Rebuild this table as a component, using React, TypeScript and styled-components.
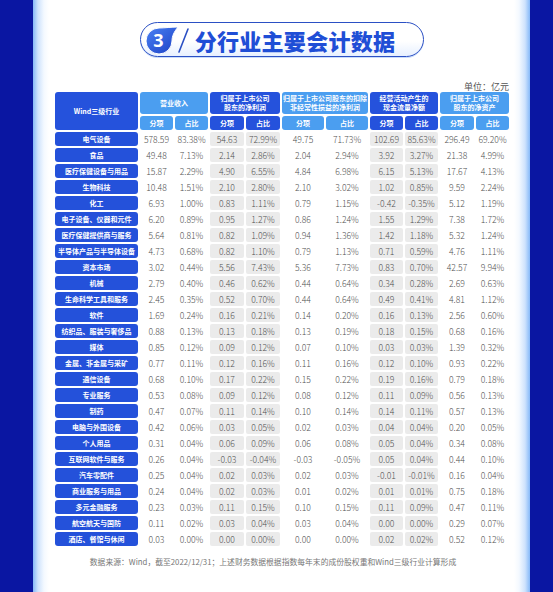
import React from "react";
import styled, { createGlobalStyle } from "styled-components";

const GlobalStyle = createGlobalStyle`
  html, body {
    margin: 0;
    padding: 0;
    background: #0a16a2;
  }
  body {
    font-family: "Noto Sans CJK SC", "Noto Sans", sans-serif;
  }
`;

const Page = styled.div`
  width: 553px;
  height: 592px;
  display: flex;
  padding-left: 33px;
  box-sizing: border-box;
  overflow: hidden;
`;

const Panel = styled.div`
  width: 497px;
  height: 592px;
  box-sizing: border-box;
  padding: 22px 21px 0 22px;
  display: flex;
  flex-direction: column;
  align-items: center;
  background: linear-gradient(
    to right,
    #86b9f8 0,
    #cfe3fd 5px,
    #f4f9ff 11px,
    #ffffff 16px,
    #ffffff calc(100% - 16px),
    #f4f9ff calc(100% - 11px),
    #cfe3fd calc(100% - 5px),
    #86b9f8 100%
  );
`;

const TitlePill = styled.div`
  display: inline-flex;
  align-items: center;
  height: 35px;
  box-sizing: border-box;
  padding: 0 28px 0 2px;
  border: 1.5px solid #2b50c4;
  border-radius: 18px;
  background: linear-gradient(#ffffff 0, #ffffff 55%, #e7f0ff 100%);
  box-shadow: 0 1px 0 #c9dcfb;
`;

const TitleText = styled.span`
  margin-left: 4px;
  font-size: 22px;
  font-weight: 900;
  letter-spacing: 0.3px;
  color: #1f4ed6;
  line-height: 1;
`;

const TableBlock = styled.div`
  margin-top: 25px;
  display: flex;
  flex-direction: column;
  width: 454px;
`;

const Unit = styled.div`
  height: 10px;
  line-height: 10px;
  font-size: 9px;
  text-align: right;
  color: #555;
`;

const Table = styled.div`
  display: grid;
  grid-template-columns: 83px 33px 33px 34px 34px 42px 42px 33px 33px 34px 33px;
  grid-template-rows: 22px 14px repeat(26, 14px);
  column-gap: 2px;
  row-gap: 2px;
`;

const HeadCell = styled.div<{ $tone: "dark" | "light"; $span?: number; $rows?: number }>`
  grid-column: span ${(p) => p.$span ?? 1};
  grid-row: span ${(p) => p.$rows ?? 1};
  display: flex;
  align-items: center;
  justify-content: center;
  text-align: center;
  border-radius: 3px;
  background: ${(p) => (p.$tone === "dark" ? "#2552dc" : "#4b9ef0")};
  color: #fff;
  font-size: 7px;
  font-weight: 700;
  line-height: 9px;
  white-space: pre;
`;

const NameCell = styled.div`
  display: flex;
  align-items: center;
  justify-content: center;
  border-radius: 3px;
  background: #2451da;
  color: #fff;
  font-size: 7px;
  font-weight: 700;
  white-space: nowrap;
`;

const NumCell = styled.div<{ $shaded: boolean }>`
  display: flex;
  align-items: center;
  justify-content: center;
  border-radius: 2px;
  background: ${(p) => (p.$shaded ? "#ebebeb" : "transparent")};
  color: #505050;
  font-size: 8.6px;
  font-weight: 300;
  white-space: nowrap;
`;

const Footnote = styled.div`
  margin-top: 11px;
  padding-right: 18px;
  font-size: 7.8px;
  line-height: 10px;
  color: #777;
  white-space: nowrap;
`;

const groups: { label: string; tone: "dark" | "light" }[] = [
  { label: "营业收入", tone: "light" },
  { label: "归属于上市公司\n股东的净利润", tone: "dark" },
  { label: "归属于上市公司股东的扣除\n非经常性损益的净利润", tone: "light" },
  { label: "经营活动产生的\n现金流量净额", tone: "dark" },
  { label: "归属于上市公司\n股东的净资产", tone: "light" },
];

const rows: [string, ...string[]][] = [
  ["电气设备", "578.59", "83.38%", "54.63", "72.99%", "49.75", "71.73%", "102.69", "85.63%", "296.49", "69.20%"],
  ["食品", "49.48", "7.13%", "2.14", "2.86%", "2.04", "2.94%", "3.92", "3.27%", "21.38", "4.99%"],
  ["医疗保健设备与用品", "15.87", "2.29%", "4.90", "6.55%", "4.84", "6.98%", "6.15", "5.13%", "17.67", "4.13%"],
  ["生物科技", "10.48", "1.51%", "2.10", "2.80%", "2.10", "3.02%", "1.02", "0.85%", "9.59", "2.24%"],
  ["化工", "6.93", "1.00%", "0.83", "1.11%", "0.79", "1.15%", "-0.42", "-0.35%", "5.12", "1.19%"],
  ["电子设备、仪器和元件", "6.20", "0.89%", "0.95", "1.27%", "0.86", "1.24%", "1.55", "1.29%", "7.38", "1.72%"],
  ["医疗保健提供商与服务", "5.64", "0.81%", "0.82", "1.09%", "0.94", "1.36%", "1.42", "1.18%", "5.32", "1.24%"],
  ["半导体产品与半导体设备", "4.73", "0.68%", "0.82", "1.10%", "0.79", "1.13%", "0.71", "0.59%", "4.76", "1.11%"],
  ["资本市场", "3.02", "0.44%", "5.56", "7.43%", "5.36", "7.73%", "0.83", "0.70%", "42.57", "9.94%"],
  ["机械", "2.79", "0.40%", "0.46", "0.62%", "0.44", "0.64%", "0.34", "0.28%", "2.69", "0.63%"],
  ["生命科学工具和服务", "2.45", "0.35%", "0.52", "0.70%", "0.44", "0.64%", "0.49", "0.41%", "4.81", "1.12%"],
  ["软件", "1.69", "0.24%", "0.16", "0.21%", "0.14", "0.20%", "0.16", "0.13%", "2.56", "0.60%"],
  ["纺织品、服装与奢侈品", "0.88", "0.13%", "0.13", "0.18%", "0.13", "0.19%", "0.18", "0.15%", "0.68", "0.16%"],
  ["媒体", "0.85", "0.12%", "0.09", "0.12%", "0.07", "0.10%", "0.03", "0.03%", "1.39", "0.32%"],
  ["金属、非金属与采矿", "0.77", "0.11%", "0.12", "0.16%", "0.11", "0.16%", "0.12", "0.10%", "0.93", "0.22%"],
  ["通信设备", "0.68", "0.10%", "0.17", "0.22%", "0.15", "0.22%", "0.19", "0.16%", "0.79", "0.18%"],
  ["专业服务", "0.53", "0.08%", "0.09", "0.12%", "0.08", "0.12%", "0.11", "0.09%", "0.56", "0.13%"],
  ["制药", "0.47", "0.07%", "0.11", "0.14%", "0.10", "0.14%", "0.14", "0.11%", "0.57", "0.13%"],
  ["电脑与外围设备", "0.42", "0.06%", "0.03", "0.05%", "0.02", "0.03%", "0.04", "0.04%", "0.20", "0.05%"],
  ["个人用品", "0.31", "0.04%", "0.06", "0.09%", "0.06", "0.08%", "0.05", "0.04%", "0.34", "0.08%"],
  ["互联网软件与服务", "0.26", "0.04%", "-0.03", "-0.04%", "-0.03", "-0.05%", "0.05", "0.04%", "0.44", "0.10%"],
  ["汽车零配件", "0.25", "0.04%", "0.02", "0.03%", "0.02", "0.03%", "-0.01", "-0.01%", "0.16", "0.04%"],
  ["商业服务与用品", "0.24", "0.04%", "0.02", "0.03%", "0.01", "0.02%", "0.01", "0.01%", "0.75", "0.18%"],
  ["多元金融服务", "0.23", "0.03%", "0.11", "0.15%", "0.10", "0.15%", "0.11", "0.09%", "0.47", "0.11%"],
  ["航空航天与国防", "0.11", "0.02%", "0.03", "0.04%", "0.03", "0.04%", "0.00", "0.00%", "0.29", "0.07%"],
  ["酒店、餐馆与休闲", "0.03", "0.00%", "0.00", "0.00%", "0.00", "0.00%", "0.02", "0.02%", "0.52", "0.12%"],
];

function Badge() {
  return (
    <svg width="48" height="30" viewBox="0 0 48 30" aria-hidden>
      <defs>
        <linearGradient id="drop" x1="0" y1="0" x2="1" y2="1">
          <stop offset="0" stopColor="#4a82f4" />
          <stop offset="1" stopColor="#1c3fc4" />
        </linearGradient>
      </defs>
      <path
        d="M35 2 C31 7 29 11 29 16 A13 13 0 1 1 16 3 C22 3 28 2 35 2 Z"
        fill="url(#drop)"
        stroke="#ffffff"
        strokeWidth="1"
      />
      <text
        x="15.5"
        y="22"
        textAnchor="middle"
        fontSize="18"
        fontWeight="700"
        fill="#ffffff"
        fontFamily="Noto Sans, sans-serif"
      >
        3
      </text>
      <line x1="36" y1="27" x2="45" y2="4" stroke="#2b50c4" strokeWidth="1.6" strokeLinecap="round" />
    </svg>
  );
}

export default function App() {
  return (
    <Page>
      <GlobalStyle />
      <Panel>
        <TitlePill>
          <Badge />
          <TitleText>分行业主要会计数据</TitleText>
        </TitlePill>
        <TableBlock>
          <Unit>单位：亿元</Unit>
          <Table>
            <HeadCell $tone="dark" $rows={2}>
              Wind三级行业
            </HeadCell>
            {groups.map((g) => (
              <HeadCell key={g.label} $tone={g.tone} $span={2}>
                {g.label}
              </HeadCell>
            ))}
            {groups.map((g, i) => (
              <React.Fragment key={i}>
                <HeadCell $tone={g.tone}>分项</HeadCell>
                <HeadCell $tone={g.tone}>占比</HeadCell>
              </React.Fragment>
            ))}
            {rows.map(([name, ...vals]) => (
              <React.Fragment key={name}>
                <NameCell>{name}</NameCell>
                {vals.map((v, j) => {
                  const group = Math.floor(j / 2);
                  return (
                    <NumCell key={j} $shaded={group === 1 || group === 3}>
                      {v}
                    </NumCell>
                  );
                })}
              </React.Fragment>
            ))}
          </Table>
        </TableBlock>
        <Footnote>
          数据来源：Wind，截至2022/12/31；上述财务数据根据指数每年末的成份股权重和Wind三级行业计算形成
        </Footnote>
      </Panel>
    </Page>
  );
}
